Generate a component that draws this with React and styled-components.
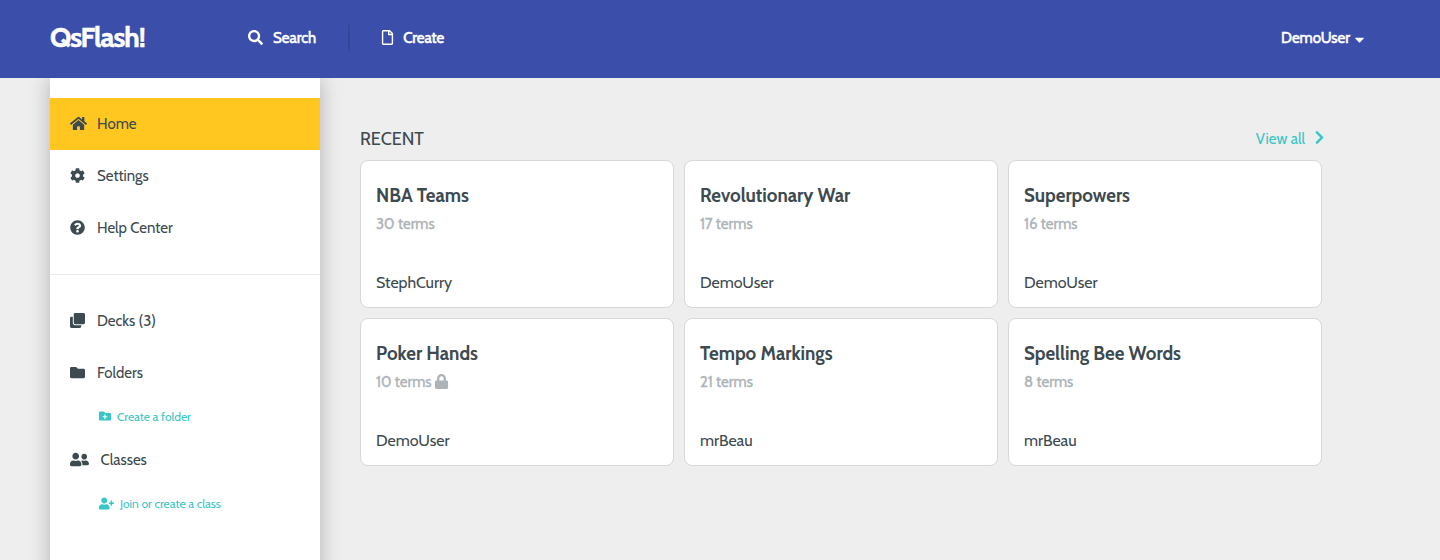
import React from "react";
import styled, { createGlobalStyle } from "styled-components";
import {
  FaSearch, FaRegFile, FaCaretDown, FaHome, FaCog, FaQuestionCircle, FaClone,
  FaFolder, FaFolderPlus, FaUserFriends, FaUserPlus, FaChevronRight, FaLock,
} from "react-icons/fa";

const GlobalStyle = createGlobalStyle`
  * { box-sizing: border-box; }
  body { margin: 0; background: #eeeeee; color: #3d4a50; font-family: Cabin, Lato, sans-serif; font-size: 16px; overflow: hidden; }
  svg { display: block; flex: none; }
`;
const Page = styled.div`
  height: 560px;
  display: flex;
  flex-direction: column;
  overflow: hidden;
`;
const Header = styled.header`
  height: 78px;
  flex: none;
  display: flex;
  align-items: center;
  padding: 0 73px 3px 50px;
  background: #3b4eaa;
  color: #fff;
  position: relative;
  z-index: 1;
`;
const Text = styled.span`
  white-space: nowrap;
`;
const Logo = styled(Text)`
  width: 198px;
  padding-bottom: 2px;
  font-size: 28px;
  font-weight: 700;
  letter-spacing: -1px;
  -webkit-text-stroke: 0.5px currentColor;
`;
const NavItem = styled.a`
  display: flex;
  align-items: center;
  gap: ${(p) => p.$gap || 10}px;
  font-size: 15px;
  -webkit-text-stroke: 0.5px currentColor;
`;
const Divider = styled.i`
  width: 2px;
  height: 26px;
  margin: 1px 30px 0 32px;
  background: #35469b;
`;
const UserMenu = styled(NavItem)`
  margin-left: auto;
  svg { margin-top: 3px; }
`;
const Body = styled.div`
  flex: 1;
  display: flex;
  padding-left: 50px;
`;
const Sidebar = styled.aside`
  width: 270px;
  height: 540px;
  flex: none;
  padding-top: 20px;
  background: #fff;
  box-shadow: 0 0 20px rgba(0, 0, 0, 0.25);
`;
const Item = styled.a`
  height: 52px;
  display: flex;
  align-items: center;
  gap: ${(p) => p.$gap}px;
  padding: 0 0 1px 20px;
  font-size: 15px;
  background: ${(p) => (p.$active ? "#ffc71f" : "transparent")};
`;
const SubItem = styled.a`
  height: 35px;
  display: flex;
  align-items: center;
  gap: 6px;
  padding-left: 49px;
  font-size: 12px;
  color: #36c6c6;
  svg { margin-bottom: 1px; }
`;
const Rule = styled.hr`
  margin: 20px 0;
  border: 0;
  border-top: 1px solid #ebebeb;
`;
const Main = styled.main`
  width: 962px;
  margin-left: 40px;
  padding-top: 46px;
`;
const SectionHead = styled.div`
  height: 36px;
  display: flex;
  align-items: center;
  justify-content: space-between;
  padding-bottom: 6px;
`;
const SectionTitle = styled(Text)`
  font-size: 18px;
`;
const ViewAll = styled.a`
  display: flex;
  align-items: center;
  gap: 7px;
  margin-right: -5px;
  padding-bottom: 1px;
  font-size: 15px;
  color: #36c6c6;
  svg { margin-bottom: 3px; }
`;
const Grid = styled.div`
  display: grid;
  grid-template-columns: repeat(3, 314px);
  gap: 10px;
`;
const Card = styled.article`
  height: 148px;
  display: flex;
  flex-direction: column;
  padding: 23px 15px 13px;
  background: #fff;
  border: 1px solid #d8d8d8;
  border-radius: 8px;
`;
const CardTitle = styled(Text)`
  font-size: 18.72px;
  line-height: 24px;
  font-weight: 700;
`;
const Terms = styled.div`
  display: flex;
  align-items: center;
  gap: 2px;
  margin-top: 5px;
  height: 22px;
  color: #adb3b7;
  font-size: 15px;
  -webkit-text-stroke: 0.3px currentColor;
  svg { margin-bottom: 1px; }
`;
const Author = styled(Text)`
  margin-top: auto;
  line-height: 22px;
`;

const decks = [
  { title: "NBA Teams", terms: "30 terms", author: "StephCurry" },
  { title: "Revolutionary War", terms: "17 terms", author: "DemoUser" },
  { title: "Superpowers", terms: "16 terms", author: "DemoUser" },
  { title: "Poker Hands", terms: "10 terms", author: "DemoUser", locked: true },
  { title: "Tempo Markings", terms: "21 terms", author: "mrBeau" },
  { title: "Spelling Bee Words", terms: "8 terms", author: "mrBeau" },
];

export default function App() {
  return (
    <Page>
      <GlobalStyle />
      <Header>
        <Logo>QsFlash!</Logo>
        <NavItem><FaSearch size={15} /><Text>Search</Text></NavItem>
        <Divider />
        <NavItem $gap={8}><FaRegFile size={15} /><Text>Create</Text></NavItem>
        <UserMenu $gap={2}><Text>DemoUser</Text><FaCaretDown size={15} /></UserMenu>
      </Header>
      <Body>
        <Sidebar>
          <Item $active $gap={10}><FaHome size={17} /><Text>Home</Text></Item>
          <Item $gap={12}><FaCog size={15} /><Text>Settings</Text></Item>
          <Item $gap={12}><FaQuestionCircle size={15} /><Text>Help Center</Text></Item>
          <Rule />
          <Item $gap={12}><FaClone size={15} /><Text>Decks (3)</Text></Item>
          <Item $gap={12}><FaFolder size={15} /><Text>Folders</Text></Item>
          <SubItem><FaFolderPlus size={12} /><Text>Create a folder</Text></SubItem>
          <Item $gap={11.5}><FaUserFriends size={19} /><Text>Classes</Text></Item>
          <SubItem><FaUserPlus size={15} /><Text>Join or create a class</Text></SubItem>
        </Sidebar>
        <Main>
          <SectionHead>
            <SectionTitle>RECENT</SectionTitle>
            <ViewAll><Text>View all</Text><FaChevronRight size={15} /></ViewAll>
          </SectionHead>
          <Grid>
            {decks.map((d) => (
              <Card key={d.title}>
                <CardTitle>{d.title}</CardTitle>
                <Terms><Text>{d.terms}</Text>{d.locked && <FaLock size={15} />}</Terms>
                <Author>{d.author}</Author>
              </Card>
            ))}
          </Grid>
        </Main>
      </Body>
    </Page>
  );
}
